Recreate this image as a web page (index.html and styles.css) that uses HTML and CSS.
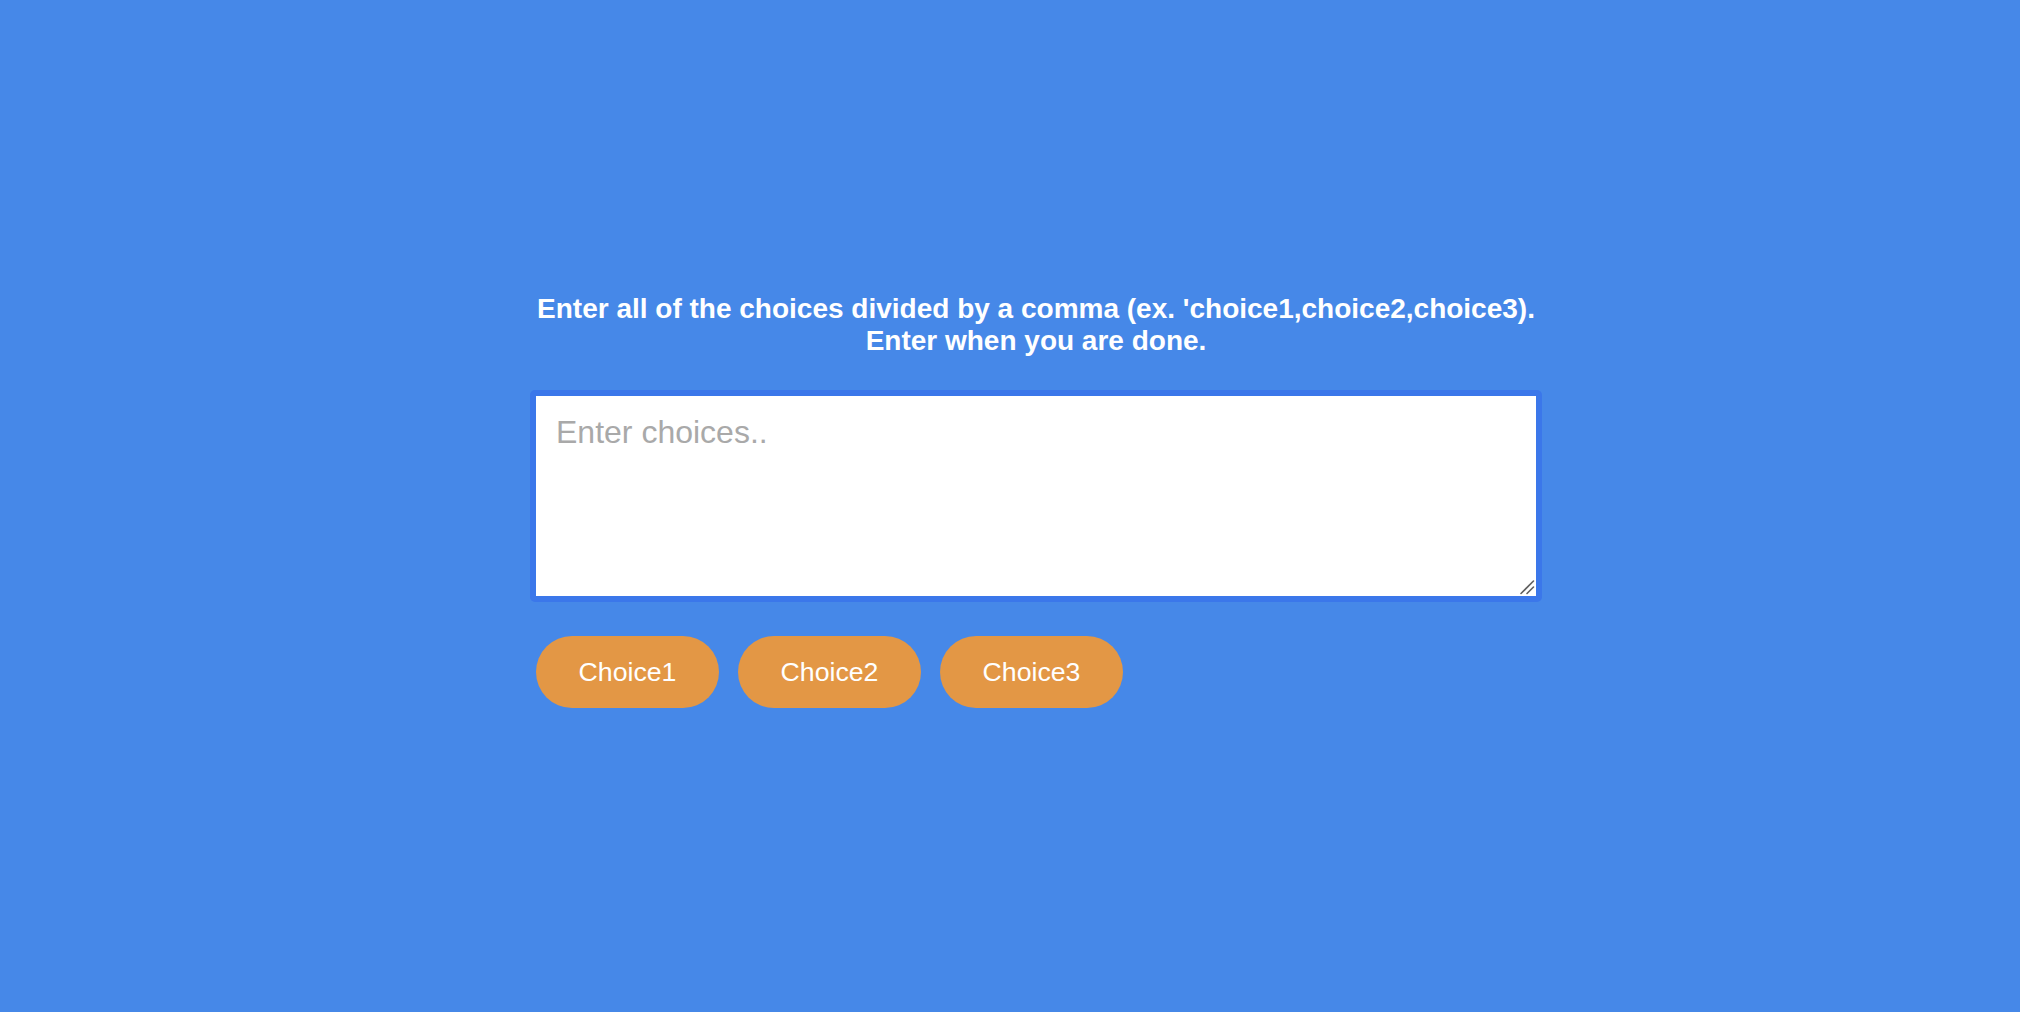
FILE: index.html
```html
<!DOCTYPE html>
<html lang="en">
<head>
<meta charset="utf-8">
<title>Choices</title>
<link rel="stylesheet" href="styles.css">
</head>
<body>
<main class="page">
  <section class="panel">
    <h1 class="prompt">Enter all of the choices divided by a comma (ex. 'choice1,choice2,choice3).<br>Enter when you are done.</h1>
    <div class="input-wrap">
      <textarea class="choices-input" placeholder="Enter choices.."></textarea>
      <svg class="resize-grip" width="16" height="16" viewBox="0 0 16 16" aria-hidden="true">
        <line x1="2" y1="14.5" x2="14.5" y2="2" stroke="#5f5f5f" stroke-width="1.6" stroke-linecap="round"/>
        <line x1="8" y1="14.5" x2="14.5" y2="8" stroke="#5f5f5f" stroke-width="1.6" stroke-linecap="round"/>
      </svg>
    </div>
    <div class="choice-list">
      <button class="choice">Choice1</button>
      <button class="choice">Choice2</button>
      <button class="choice">Choice3</button>
    </div>
  </section>
</main>
</body>
</html>
```

FILE: styles.css
```css
html, body {
  margin: 0;
  padding: 0;
  height: 100%;
}

body {
  background: #4688e8;
  font-family: "Liberation Sans", Arial, Helvetica, sans-serif;
}

.page {
  box-sizing: border-box;
  min-height: 100%;
  padding: 293px 0 0 52px;
  display: flex;
  justify-content: center;
}

.panel {
  width: 1012px;
  display: flex;
  flex-direction: column;
}

.prompt {
  margin: 0;
  color: #ffffff;
  font-size: 28px;
  line-height: 32px;
  font-weight: 700;
  text-align: center;
}

.input-wrap {
  position: relative;
  margin-top: 33px;
}

.choices-input {
  box-sizing: border-box;
  display: block;
  width: 1012px;
  height: 212px;
  padding: 18px 20px;
  border: 6px solid #3b77ea;
  border-radius: 5px;
  background: #ffffff;
  font-family: "Liberation Sans", Arial, Helvetica, sans-serif;
  font-size: 32px;
  color: #333333;
  outline: none;
  resize: none;
}

.choices-input::placeholder {
  color: #a9a9a9;
}

.resize-grip {
  position: absolute;
  right: 7px;
  bottom: 7px;
  pointer-events: none;
}

.choice-list {
  display: flex;
  gap: 19px;
  margin-top: 34px;
  padding-left: 6px;
}

.choice {
  box-sizing: border-box;
  width: 183px;
  height: 72px;
  padding: 0;
  border: none;
  border-radius: 36px;
  background: #e39745;
  color: #ffffff;
  font-family: "Liberation Sans", Arial, Helvetica, sans-serif;
  font-size: 26.7px;
  cursor: pointer;
}
```
